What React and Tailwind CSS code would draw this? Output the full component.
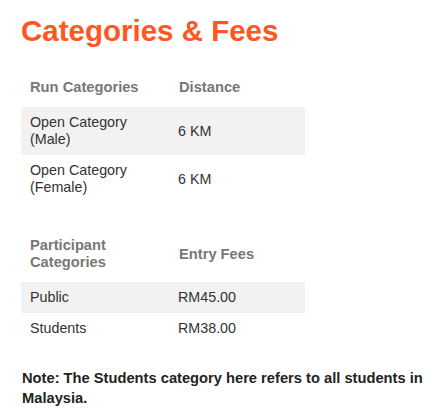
export default function App() {
  const runRows = [
    ['Open Category (Male)', '6 KM'],
    ['Open Category (Female)', '6 KM'],
  ]
  const feeRows = [
    ['Public', 'RM45.00'],
    ['Students', 'RM38.00'],
  ]

  const Table = ({ head, rows }) => (
    <table className="table-fixed border-collapse w-[284px] leading-[17px]">
      <colgroup>
        <col className="w-[149px]" />
        <col className="w-[135px]" />
      </colgroup>
      <thead>
        <tr>
          {head.map((h) => (
            <th key={h} className="text-left align-middle text-[14.7px] font-bold text-[#777777] pl-[9px] pr-2 pt-[7px] pb-[11px]">
              {h}
            </th>
          ))}
        </tr>
      </thead>
      <tbody>
        {rows.map((r, i) => (
          <tr key={i} className={i % 2 === 0 ? 'bg-[#f2f2f2]' : ''}>
            <td className="text-[14.3px] text-[#333333] pl-[9px] pr-2 py-[7px] align-middle">{r[0]}</td>
            <td className="text-[14.3px] text-[#333333] pl-2 pr-2 py-[7px] align-middle">{r[1]}</td>
          </tr>
        ))}
      </tbody>
    </table>
  )

  return (
    <div className="bg-white w-[439px] h-[420px] overflow-hidden pl-[21px] pt-[13px]" style={{ fontFamily: '"Liberation Sans", Arial, sans-serif' }}>
      <h1 className="text-[29.5px] leading-[36px] font-bold text-[#ff5722]">Categories &amp; Fees</h1>
      <div className="mt-[23px]">
        <Table head={['Run Categories', 'Distance']} rows={runRows} />
      </div>
      <div className="mt-[27px]">
        <Table head={['Participant Categories', 'Entry Fees']} rows={feeRows} />
      </div>
      <p className="mt-[24px] w-[410px] text-[14.7px] leading-[20px] font-bold text-[#222222] pl-px">
        Note: The Students category here refers to all students in Malaysia.
      </p>
    </div>
  )
}
